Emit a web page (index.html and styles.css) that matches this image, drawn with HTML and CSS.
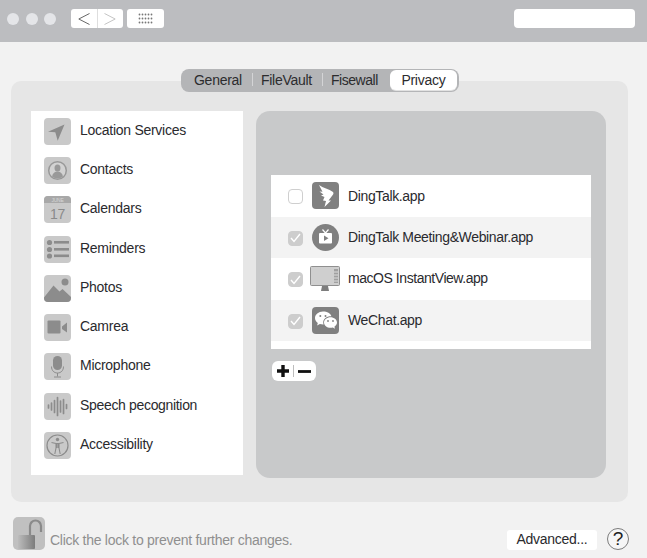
FILE: index.html
```html
<!DOCTYPE html>
<html lang="en">
<head>
<meta charset="utf-8">
<title>Security &amp; Privacy</title>
<link rel="stylesheet" href="styles.css">
</head>
<body>
<header class="titlebar">
  <div class="dots"><span class="dot"></span><span class="dot"></span><span class="dot"></span></div>
  <div class="nav">
    <span class="nav-btn nav-back"><svg width="12" height="12" viewBox="0 0 12 12"><path d="M11.500 .5 .8 6l10.700 5.500" fill="none" stroke="#666" stroke-width="1"/></svg></span>
    <span class="nav-btn"><svg width="12" height="12" viewBox="0 0 12 12"><path d="M.5 .5 11.200 6 .5 11.500" fill="none" stroke="#c4c4c4" stroke-width="1"/></svg></span>
  </div>
  <div class="grid-btn">
    <svg width="15" height="12" viewBox="0 0 15 12" fill="#777"><g id="d"><circle cx="1.500" cy="1.500" r=".9"/><circle cx="4.500" cy="1.500" r=".9"/><circle cx="7.500" cy="1.500" r=".9"/><circle cx="10.500" cy="1.500" r=".9"/><circle cx="13.500" cy="1.500" r=".9"/></g><use href="#d" y="4"/><use href="#d" y="8"/></svg>
  </div>
  <div class="search"></div>
</header>

<main class="main">
  <nav class="tabs">
    <span class="tab">General</span><span class="tab-sep"></span><span class="tab">FileVault</span><span class="tab-sep"></span><span class="tab tab-tight">Fisewall</span><span class="tab tab-active">Privacy</span>
  </nav>

  <section class="panel">
    <ul class="sidebar">
      <li class="side-row"><span class="side-icon"><svg viewBox="0 0 27 27" width="27" height="27"><path d="M20.500 6.500 4 13.700l7.300.5 2.400 8.500z" fill="#8c8c8c"/></svg></span>Location Services</li>
      <li class="side-row"><span class="side-icon"><svg viewBox="0 0 27 27" width="27" height="27"><circle cx="13.500" cy="13.500" r="8.800" fill="#d2d2d2" stroke="#999" stroke-width="1.500"/><ellipse cx="13.500" cy="11" rx="3" ry="3.600" fill="#999"/><path d="M8 19.500c.6-3.500 3-5 5.500-5s4.900 1.500 5.500 5a8.800 8.800 0 0 1-11 0z" fill="#999"/></svg></span>Contacts</li>
      <li class="side-row"><span class="side-icon"><svg viewBox="0 0 27 27" width="27" height="27"><path d="M0 7V0h27v7z" fill="#a8a8a8"/><text x="13.500" y="5.700" class="cal-month">JUNE</text><text x="13.500" y="22.500" class="cal-day">17</text></svg></span>Calendars</li>
      <li class="side-row"><span class="side-icon"><svg viewBox="0 0 27 27" width="27" height="27" fill="#8c8c8c"><circle cx="5.500" cy="6.500" r="2.600"/><circle cx="5.500" cy="13.500" r="2.600"/><circle cx="5.500" cy="20" r="2.600"/><rect x="10" y="5" width="15" height="2.600"/><rect x="10" y="12" width="15" height="2.600"/><rect x="10" y="18.500" width="15" height="2.600"/></svg></span>Reminders</li>
      <li class="side-row"><span class="side-icon"><svg viewBox="0 0 27 27" width="27" height="27" fill="#8c8c8c"><circle cx="21" cy="7" r="3.500"/><path d="M0 22.500 9.500 10.500l6 6 3-2.500 8.500 8V27H0z"/></svg></span>Photos</li>
      <li class="side-row"><span class="side-icon"><svg viewBox="0 0 27 27" width="27" height="27" fill="#8c8c8c"><rect x="3.500" y="6.500" width="13" height="13" rx="1"/><path d="M18 12.500l5-4v10l-5-3.500z"/></svg></span>Camrea</li>
      <li class="side-row"><span class="side-icon"><svg viewBox="0 0 27 27" width="27" height="27"><rect x="9" y="3" width="9" height="14" rx="4.500" fill="#8c8c8c"/><path d="M7.500 13.500c0 4 2.500 6.500 6 6.500s6-2.500 6-6.500M13.500 20v3.500M10 24h7" fill="none" stroke="#8c8c8c" stroke-width="1"/></svg></span>Microphone</li>
      <li class="side-row side-row-tight"><span class="side-icon"><svg viewBox="0 0 27 27" width="27" height="27"><path d="M4.500 12v3M7.500 10v7M10.500 7.500v12M13.500 4.500v18M16.500 8v11M19.500 6.500v14M22.500 11.500v4" fill="none" stroke="#8c8c8c" stroke-width="1.700" stroke-linecap="round"/></svg></span>Speech pecognition</li>
      <li class="side-row"><span class="side-icon"><svg viewBox="0 0 27 27" width="27" height="27"><circle cx="13.500" cy="13.500" r="10.500" fill="none" stroke="#8c8c8c" stroke-width="1.200"/><circle cx="13.500" cy="7.500" r="1.700" fill="#8c8c8c"/><path d="M7.500 10.500 12 11.500h3l4.500-1M12 11.500v4.500l-1.200 6M15 11.500v4.500l1.200 6M12.800 16v-4.500M14.200 16v-4.500" fill="none" stroke="#8c8c8c" stroke-width="1.100" stroke-linejoin="round"/></svg></span>Accessibility</li>
    </ul>

    <div class="apps">
      <ul class="app-list">
        <li class="app-row">
          <span class="check"></span>
          <span class="app-icon"><svg viewBox="0 0 27 27" width="27" height="27"><rect width="27" height="27" rx="4" fill="#808080"/><path d="M7 3c4 3 10 4 14 7 .7.800.6 2-.3 3l-4.200 5.500H19L12.500 25l1.500-6-3-.5 1.500-3.500L9 13.500l2.500-1-4-3 3 .2z" fill="#fff"/></svg></span>
          <span>DingTalk.app</span>
        </li>
        <li class="app-row app-row-alt">
          <span class="check check-on"><svg width="11" height="10" viewBox="0 0 11 10"><path d="M1 5l3 3.500L10 1" fill="none" stroke="#fff" stroke-width="1.400"/></svg></span>
          <span class="app-icon"><svg viewBox="0 0 27 27" width="27" height="27"><circle cx="13.500" cy="13.500" r="13.500" fill="#808080"/><rect x="7" y="9" width="13" height="10.500" rx="1" fill="#fff"/><path d="M10.500 5.500l3 3.500 3-3.500" fill="none" stroke="#fff" stroke-width="1.200"/><path d="M12 11.500l4.500 2.700-4.500 2.800z" fill="#808080"/></svg></span>
          <span>DingTalk Meeting&amp;Webinar.app</span>
        </li>
        <li class="app-row">
          <span class="check check-on"><svg width="11" height="10" viewBox="0 0 11 10"><path d="M1 5l3 3.500L10 1" fill="none" stroke="#fff" stroke-width="1.400"/></svg></span>
          <span class="app-icon"><svg viewBox="0 0 30 26" width="30" height="26"><rect x=".5" y=".5" width="29" height="19" rx="1" fill="#cfcfcf" stroke="#8f8f8f"/><rect x="24" y="3" width="4" height="14" fill="#a0a0a0"/><path d="M24 6h4M24 9h4M24 12h4M24 15h4" stroke="#ddd" stroke-width="1"/><path d="M12 20h6l1 5h-8z" fill="#7d7d7d"/></svg></span>
          <span class="name-up">macOS InstantView.app</span>
        </li>
        <li class="app-row app-row-alt">
          <span class="check check-on"><svg width="11" height="10" viewBox="0 0 11 10"><path d="M1 5l3 3.500L10 1" fill="none" stroke="#fff" stroke-width="1.400"/></svg></span>
          <span class="app-icon"><svg viewBox="0 0 27 27" width="27" height="27"><rect width="27" height="27" rx="4" fill="#808080"/><path d="M11 4.500c-4.500 0-8 3-8 6.500 0 2 1.100 3.700 2.800 5l-.7 2.400 2.800-1.400c1 .3 2.100.5 3.100.5h.6c-.3-.7-.4-1.400-.4-2.100 0-3.600 3.300-6.200 7.700-6.200h.5C18.600 6.600 15.100 4.500 11 4.500z" fill="#fff"/><path d="M25 15.500c0-3-3-5.300-6.500-5.300s-6.500 2.300-6.500 5.300 3 5.300 6.500 5.300c.8 0 1.600-.1 2.300-.3l2.200 1.200-.6-2c1.600-1 2.600-2.500 2.600-4.200z" fill="#fff"/><circle cx="8.300" cy="9" r="1" fill="#808080"/><circle cx="13.500" cy="9" r="1" fill="#808080"/><circle cx="16" cy="14" r=".9" fill="#808080"/><circle cx="21" cy="14" r=".9" fill="#808080"/></svg></span>
          <span>WeChat.app</span>
        </li>
      </ul>
      <div class="plus-minus">
        <svg width="12" height="12" viewBox="0 0 12 12"><path d="M6 0v12M0 6h12" stroke="#111" stroke-width="3.400"/></svg>
        <span class="pm-sep"></span>
        <svg width="13" height="13" viewBox="0 0 13 13"><path d="M0 6.500h13" stroke="#111" stroke-width="2.800"/></svg>
      </div>
    </div>
  </section>

  <footer class="footer">
    <span class="lock"><svg viewBox="0 0 32 33" width="32" height="33"><defs><linearGradient id="lg" x1="0" x2="1" y1="0" y2="0"><stop offset="0" stop-color="#bcbcbc"/><stop offset="1" stop-color="#7c7c7c"/></linearGradient></defs><rect width="32" height="33" rx="5" fill="#c0c0c0"/><path d="M17 18V9a5.500 5.500 0 0 1 11 0v6" fill="none" stroke="#8a8a8a" stroke-width="2.200"/><rect x="5" y="18" width="17" height="14" rx="1" fill="url(#lg)"/></svg></span>
    <span class="lock-text">Click the lock to prevent further changes.</span>
    <span class="advanced">Advanced...</span>
    <span class="help">?</span>
  </footer>
</main>
</body>
</html>
```
FILE: styles.css
```css
* { box-sizing: border-box; }
html, body { margin: 0; padding: 0; }
body {
  width: 647px;
  height: 558px;
  overflow: hidden;
  background: #f2f2f2;
  font-family: "Liberation Sans", Arial, sans-serif;
  font-size: 14px;
  letter-spacing: -0.27px;
  color: #2a2a2e;
}
ul { list-style: none; margin: 0; padding: 0; }

.titlebar {
  height: 42px;
  background: #bcbdc0;
  display: flex;
  align-items: center;
  padding: 0 12px 5px 7px;
}
.dots { display: flex; gap: 6.500px; }
.dot { width: 12px; height: 12px; border-radius: 50%; background: #e4e5e8; }
.nav {
  margin-left: 15px;
  width: 52px;
  height: 19px;
  background: #fff;
  border-radius: 3px;
  display: flex;
}
.nav-btn { flex: 1; display: flex; align-items: center; justify-content: center; }
.nav-back { border-right: 1px solid #dedede; }
.grid-btn {
  margin-left: 4px;
  width: 37px;
  height: 19px;
  background: #fff;
  border-radius: 3px;
  display: flex;
  align-items: center;
  justify-content: center;
}
.search {
  margin-left: auto;
  width: 121px;
  height: 19px;
  background: #fff;
  border-radius: 4px;
}

.main { display: flex; flex-direction: column; padding: 27px 19px 0 11px; }
.tabs {
  align-self: center;
  position: relative;
  z-index: 1;
  margin-bottom: -11px;
  margin-left: 1px;
  width: 278px;
  height: 23px;
  display: flex;
  align-items: center;
  padding: 0 0 2px 13px;
  background: #b4b5b7;
  border-radius: 8px;
}
.tab { white-space: nowrap; color: #2c2c2e; }
.tab-tight { letter-spacing: -0.45px; }
.tab-sep { width: 1px; height: 13px; margin: 0 8px 0 10px; background: #d4d4d6; }
.tab-active {
  margin-left: 12px;
  width: 67px;
  height: 20px;
  line-height: 20px;
  text-align: center;
  background: #fff;
  border-radius: 6px;
  box-shadow: 0 1px 0 #e2e2e2;
}

.panel {
  height: 421px;
  background: #e6e6e6;
  border-radius: 10px;
  padding: 30px 22px 0 20px;
  display: flex;
  align-items: flex-start;
  gap: 13px;
}
.sidebar {
  width: 212px;
  height: 364px;
  flex: none;
  background: #fff;
  padding: 6.900px 0 0 13px;
  display: flex;
  flex-direction: column;
  gap: 12.250px;
}
.side-row { display: flex; align-items: center; gap: 9px; height: 27px; padding-bottom: 3px; color: #2a2a2e; }
.side-row-tight { letter-spacing: -0.33px; }
.side-icon {
  width: 27px;
  height: 27px;
  flex: none;
  position: relative;
  top: 1.500px;
  border-radius: 4px;
  background: #c9c9c9;
  overflow: hidden;
}
.side-icon svg { display: block; }
.cal-month { font-size: 5px; fill: #d8d8d8; text-anchor: middle; font-family: "Liberation Sans", sans-serif; }
.cal-day { font-size: 14px; fill: #8a8a8a; text-anchor: middle; font-family: "Liberation Sans", sans-serif; }

.apps {
  width: 350px;
  height: 367px;
  flex: none;
  background: #c8c9ca;
  border-radius: 14px;
  padding: 64px 15px 0;
}
.app-list { background: #fff; height: 174px; width: 320px; }
.app-row {
  height: 41.500px;
  display: flex;
  align-items: center;
  padding-left: 17px;
  color: #2a2a2e;
  letter-spacing: -0.36px;
}
.app-row-alt { background: #f3f3f3; }
.name-up { margin-top: -2px; letter-spacing: -0.45px; }
.check {
  width: 15px;
  height: 15px;
  margin-top: 2px;
  flex: none;
  border: 1px solid #cfcfcf;
  border-radius: 4px;
  background: #fff;
  display: flex;
  align-items: center;
  justify-content: center;
}
.check-on { background: #cdcdcd; border-color: #cdcdcd; }
.app-icon { width: 30px; margin: 0 8px 0 7px; display: flex; justify-content: center; flex: none; }
.app-icon svg { display: block; }
.plus-minus {
  margin: 12px 0 0 1px;
  width: 44px;
  height: 20px;
  background: #fff;
  border-radius: 6px;
  display: flex;
  align-items: center;
  padding-left: 5px;
  gap: 4px;
}
.pm-sep { width: 1px; height: 12px; background: #bdbdbd; }

.footer {
  height: 33px;
  margin-top: 15px;
  margin-left: 2px;
  margin-right: -1px;
  display: flex;
  align-items: flex-end;
}
.lock { width: 32px; height: 33px; flex: none; }
.lock svg { display: block; }
.lock-text { margin-left: 5px; margin-bottom: 2px; color: #8f8f8f; white-space: nowrap; }
.advanced {
  margin-left: auto;
  width: 90px;
  height: 20px;
  line-height: 19px;
  text-align: center;
  background: #fff;
  border-radius: 3px;
  color: #2a2a2e;
}
.help {
  margin-left: 10px;
  width: 22px;
  height: 22px;
  border: 1px solid #7c7c7c;
  border-radius: 50%;
  background: #f6f6f6;
  text-align: center;
  font-size: 19px;
  letter-spacing: 0;
  line-height: 20px;
  color: #222;
}
```
